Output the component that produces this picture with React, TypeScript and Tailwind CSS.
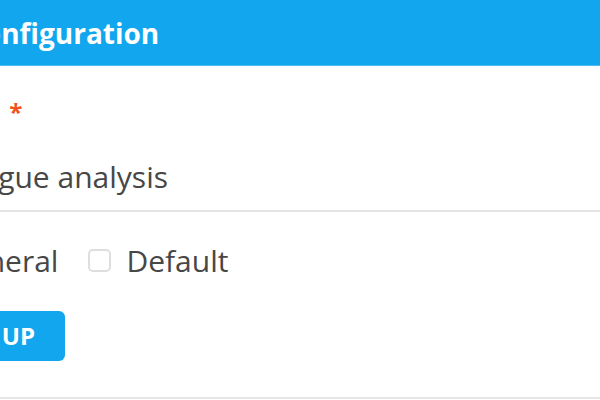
function App() {
    return (
        <div className="w-[600px] h-[400px] overflow-hidden bg-white" style={{ fontFamily: '"Open Sans", "Liberation Sans", sans-serif' }}>
            <div className="-ml-[75px] w-[700px]">
                <div className="h-[66px] bg-[#11a6ee] border-b border-[#4dbbf2] flex items-center pl-[41px]">
                    <h1 className="text-white font-bold text-[28px] leading-none">Configuration</h1>
                </div>
                <div className="pl-6">
                    <label className="flex items-start mt-[29px] text-[18px] leading-[33px] text-[#474747]">
                        <span className="-ml-[4px]">Name</span>
                        <span className="ml-[14px] text-[#f4511e] font-bold text-[24px] leading-[33px]">*</span>
                    </label>
                    <div className="pt-[29px] pb-[13px] border-b-2 border-[#e4e4e4] text-[30px] leading-[40px] text-[#474747] whitespace-nowrap">
                        League analysis
                    </div>
                    <div className="mt-[28px] flex items-center h-[40px] text-[30px] text-[#474747]">
                        <span className="-ml-[1px]">General</span>
                        <span className="ml-[30px] w-[23px] h-[23px] rounded-[5px] border-2 border-[#dedede]" />
                        <span className="ml-[15px]">Default</span>
                    </div>
                    <button className="mt-[31px] h-[50px] w-[116px] pr-[30px] flex items-center justify-end rounded-md bg-[#11a6ee] text-white font-bold text-[24px] whitespace-pre">
                        SET UP
                    </button>
                    <div className="mt-[36px] border-t-2 border-[#e6e6e6]" />
                </div>
            </div>
        </div>
    );
}

export default App;
